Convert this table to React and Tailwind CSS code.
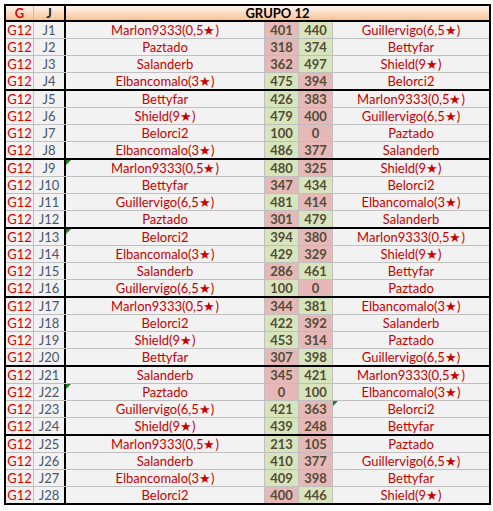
const rows = [
  ["Marlon9333(0,5★)", 401, 440, "Guillervigo(6,5★)"],
  ["Paztado", 318, 374, "Bettyfar"],
  ["Salanderb", 362, 497, "Shield(9★)"],
  ["Elbancomalo(3★)", 475, 394, "Belorci2"],
  ["Bettyfar", 426, 383, "Marlon9333(0,5★)"],
  ["Shield(9★)", 479, 400, "Guillervigo(6,5★)"],
  ["Belorci2", 100, 0, "Paztado"],
  ["Elbancomalo(3★)", 486, 377, "Salanderb"],
  ["Marlon9333(0,5★)", 480, 325, "Shield(9★)", "L"],
  ["Bettyfar", 347, 434, "Belorci2"],
  ["Guillervigo(6,5★)", 481, 414, "Elbancomalo(3★)"],
  ["Paztado", 301, 479, "Salanderb"],
  ["Belorci2", 394, 380, "Marlon9333(0,5★)", "L"],
  ["Elbancomalo(3★)", 429, 329, "Shield(9★)"],
  ["Salanderb", 286, 461, "Bettyfar"],
  ["Guillervigo(6,5★)", 100, 0, "Paztado"],
  ["Marlon9333(0,5★)", 344, 381, "Elbancomalo(3★)"],
  ["Belorci2", 422, 392, "Salanderb"],
  ["Shield(9★)", 453, 314, "Paztado"],
  ["Bettyfar", 307, 398, "Guillervigo(6,5★)"],
  ["Salanderb", 345, 421, "Marlon9333(0,5★)"],
  ["Paztado", 0, 100, "Elbancomalo(3★)", "L"],
  ["Guillervigo(6,5★)", 421, 363, "Belorci2", "R"],
  ["Shield(9★)", 439, 248, "Bettyfar"],
  ["Marlon9333(0,5★)", 213, 105, "Paztado"],
  ["Salanderb", 410, 377, "Guillervigo(6,5★)"],
  ["Elbancomalo(3★)", 409, 398, "Bettyfar"],
  ["Belorci2", 400, 446, "Shield(9★)"],
];

const GREEN = "bg-[#d8e4bc]";
const RED = "bg-[#e6b8b7]";

// little green marker in the corner of a cell
function Flag() {
  return (
    <span className="absolute left-0 top-0 h-0 w-0 border-r-[5px] border-t-[5px] border-r-transparent border-t-[#1b7f1b]" />
  );
}

function Row({ r, i }) {
  const [a, s1, s2, b, flag] = r;
  const last = i === rows.length - 1;
  const groupEnd = i % 4 === 3 && !last;
  const rowCls = last
    ? "h-[16px]"
    : groupEnd
    ? "h-[18px] border-b-2 border-black"
    : "h-[17px] border-b border-[#bfbfbf]";
  const c1 = s1 > s2 ? GREEN : RED;
  const c2 = s2 > s1 ? GREEN : RED;

  return (
    <div className={`flex box-border ${rowCls}`}>
      <div className="flex w-[28px] items-center justify-center border-r border-[#bfbfbf] pt-px text-[#e00000]">G12</div>
      <div className="flex w-[32px] items-center justify-center border-r-2 border-black pt-px text-[#46566a]">J{i + 1}</div>
      <div className="relative flex w-[199px] items-center justify-center border-r border-[#bfbfbf] pt-px text-[#c80000]">
        {flag === "L" && <Flag />}
        {a}
      </div>
      <div className={`flex w-[34px] items-center justify-center border-r border-[#bfbfbf] pt-px font-bold text-[#524c36] ${c1}`}>{s1}</div>
      <div className={`flex w-[34px] items-center justify-center border-r border-[#bfbfbf] pt-px font-bold text-[#524c36] ${c2}`}>{s2}</div>
      <div className="relative flex w-[156px] items-center justify-center pt-px text-[#c80000]">
        {flag === "R" && <Flag />}
        {b}
      </div>
    </div>
  );
}

export default function App() {
  return (
    <div className="min-h-[511px] w-[493px] bg-white pl-[4px] pt-[4px]" style={{ fontFamily: "Lato, 'Liberation Sans', sans-serif" }}>
      <div className="w-[487px] border-2 border-black bg-[#f2f2f2] text-[13px] leading-none">
        {/* header */}
        <div className="flex h-[16px] border-b-2 border-black bg-linear-to-b from-[#fdf4ee] to-[#f7c396] font-bold">
          <div className="flex w-[28px] items-center justify-center border-r border-[#bfbfbf] text-[#e00000]">G</div>
          <div className="flex w-[32px] items-center justify-center border-r-2 border-black text-[#222]">J</div>
          <div className="flex flex-1 items-center justify-center text-black">GRUPO 12</div>
        </div>
        {rows.map((r, i) => (
          <Row key={i} r={r} i={i} />
        ))}
      </div>
    </div>
  );
}
